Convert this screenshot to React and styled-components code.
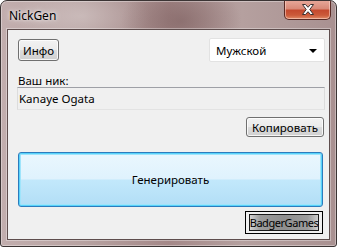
import React from "react";
import styled, { createGlobalStyle } from "styled-components";

const Global = createGlobalStyle`
  html, body { margin: 0; padding: 0; background: #ffffff; }
  body { font-family: "Noto Sans", "Liberation Sans", sans-serif; }
`;

const Window = styled.div`
  box-sizing: border-box;
  width: 337px;
  height: 247px;
  border: 1px solid #3b3434;
  border-radius: 7px 7px 3px 3px;
  display: flex;
  flex-direction: column;
  background:
    radial-gradient(ellipse 60px 40px at 180px 20px, rgba(120, 90, 90, 0.55), transparent),
    radial-gradient(ellipse 70px 30px at 80px 15px, rgba(255, 255, 255, 0.25), transparent),
    linear-gradient(90deg, #c2aeae 0%, #b7a2a1 25%, #a48888 50%, #b5a09f 72%, #a99191 100%);
  box-shadow: inset 0 0 0 1px rgba(255, 255, 255, 0.35);
  overflow: hidden;
`;

const TitleBar = styled.div`
  height: 28px;
  display: flex;
  align-items: flex-start;
  justify-content: space-between;
  padding-left: 8px;
  padding-right: 5px;
`;

const Title = styled.div`
  font-size: 12px;
  line-height: 15px;
  margin-top: 7px;
  color: #000;
  text-shadow: 0 0 6px rgba(255, 255, 255, 0.9), 0 0 3px rgba(255, 255, 255, 0.7);
`;

const CloseButton = styled.div`
  box-sizing: border-box;
  width: 47px;
  height: 20px;
  margin-top: -1px;
  border: 1px solid #5a2a24;
  border-top: none;
  border-radius: 0 0 5px 5px;
  background: linear-gradient(180deg, #e8aa9c 0%, #d98a78 45%, #c54a2f 55%, #cb5a3a 80%, #e08b68 100%);
  box-shadow: inset 0 0 0 1px rgba(255, 220, 210, 0.55);
  display: flex;
  align-items: center;
  justify-content: center;
`;

const Client = styled.div`
  box-sizing: border-box;
  width: 323px;
  height: 211px;
  margin-left: 6px;
  border: 1px solid #5e4d4d;
  background: #f0f0f0;
  box-shadow: 0 0 0 1px rgba(255, 255, 255, 0.35);
  display: flex;
  flex-direction: column;
  padding: 8px 4px 0 9px;
  font-size: 11.5px;
`;

const TopRow = styled.div`
  display: flex;
  align-items: center;
  justify-content: space-between;
  height: 24px;
`;

const WinButton = styled.button`
  box-sizing: border-box;
  width: ${(p) => p.$w}px;
  height: ${(p) => p.$h}px;
  margin: ${(p) => p.$m || "0"};
  padding: 0;
  border: 1px solid #707070;
  border-radius: 3px;
  font-family: "Noto Sans", "Liberation Sans", sans-serif;
  font-size: 11.5px;
  color: #000;
  background: linear-gradient(180deg, #f2f2f2 0%, #ebebeb 50%, #dddddd 51%, #cfcfcf 100%);
  box-shadow: inset 0 0 0 1px rgba(255, 255, 255, 0.8);
  display: flex;
  align-items: center;
  justify-content: center;
`;

const Select = styled.div`
  box-sizing: border-box;
  width: 116px;
  height: 24px;
  border: 1px solid #e2e2e2;
  border-radius: 2px;
  background: #ffffff;
  display: flex;
  align-items: center;
  justify-content: space-between;
  padding: 0 7px 0 6px;
  color: #000;
`;

const Arrow = styled.span`
  width: 0;
  height: 0;
  border-left: 4px solid transparent;
  border-right: 4px solid transparent;
  border-top: 4px solid #000;
  margin-top: 2px;
`;

const Label = styled.div`
  line-height: 13px;
  margin-top: 12px;
  padding-left: 1px;
  color: #000;
`;

const TextBox = styled.div`
  box-sizing: border-box;
  height: 23px;
  border: 1px solid #abadb3;
  border-top-color: #9ea0a6;
  border-left-color: #dcdcdc;
  border-right-color: #dcdcdc;
  border-bottom-color: #e3e3e3;
  background: #f0f0f0;
  padding: 0 0 1px 1px;
  display: flex;
  align-items: center;
  color: #000;
`;

const RightRow = styled.div`
  display: flex;
  justify-content: flex-end;
  padding-right: ${(p) => p.$pr}px;
  margin-top: ${(p) => p.$mt}px;
`;

const BigButton = styled.div`
  box-sizing: border-box;
  height: 55px;
  margin: 15px 2px 0 1px;
  border: 1px solid #2c7cbd;
  border-radius: 3px;
  background: linear-gradient(180deg, #eaf7fe 0%, #dff2fd 49%, #c2e8fb 51%, #b2def6 100%);
  box-shadow: inset 0 0 0 1px #58d3fb, inset 0 0 0 2px #9fe4fb;
  display: flex;
  align-items: center;
  justify-content: center;
  color: #000;
`;

const BadgeFrame = styled.div`
  box-sizing: border-box;
  width: 78px;
  height: 23px;
  flex: none;
  border: 1px solid #000;
  padding: 2px 3px;
  display: flex;
`;

const Badge = styled.div`
  flex: 1;
  min-width: 0;
  overflow: hidden;
  white-space: nowrap;
  border: 1px solid #1a1a1a;
  background: linear-gradient(90deg, #d2d2d2 0%, #9c9c9c 15%, #8f8f8f 50%, #9c9c9c 85%, #cfcfcf 100%);
  display: flex;
  align-items: center;
  justify-content: center;
  font-size: 11px;
  line-height: 14px;
  color: #000;
  letter-spacing: -0.45px;
`;

export default function App() {
  return (
    <>
      <Global />
      <Window>
        <TitleBar>
          <Title>NickGen</Title>
          <CloseButton>
            <svg width="14" height="11" viewBox="0 0 14 11">
              <path
                d="M1.5 0.5 H4.5 L7 3.3 L9.5 0.5 H12.5 L8.8 5.5 L12.5 10.5 H9.5 L7 7.7 L4.5 10.5 H1.5 L5.2 5.5 Z"
                fill="#ffffff"
                stroke="#3a3030"
                strokeWidth="1"
                strokeLinejoin="round"
              />
            </svg>
          </CloseButton>
        </TitleBar>
        <Client>
          <TopRow>
            <WinButton $w={41} $h={22} $m="0 0 0 1px">Инфо</WinButton>
            <Select>
              <span>Мужской</span>
              <Arrow />
            </Select>
          </TopRow>
          <Label>Ваш ник:</Label>
          <TextBox>Kanaye Ogata</TextBox>
          <RightRow $pr={1} $mt={7}>
            <WinButton $w={78} $h={20}>Копировать</WinButton>
          </RightRow>
          <BigButton>Генерировать</BigButton>
          <RightRow $pr={2} $mt={4}>
            <BadgeFrame>
              <Badge>BadgerGames</Badge>
            </BadgeFrame>
          </RightRow>
        </Client>
      </Window>
    </>
  );
}
